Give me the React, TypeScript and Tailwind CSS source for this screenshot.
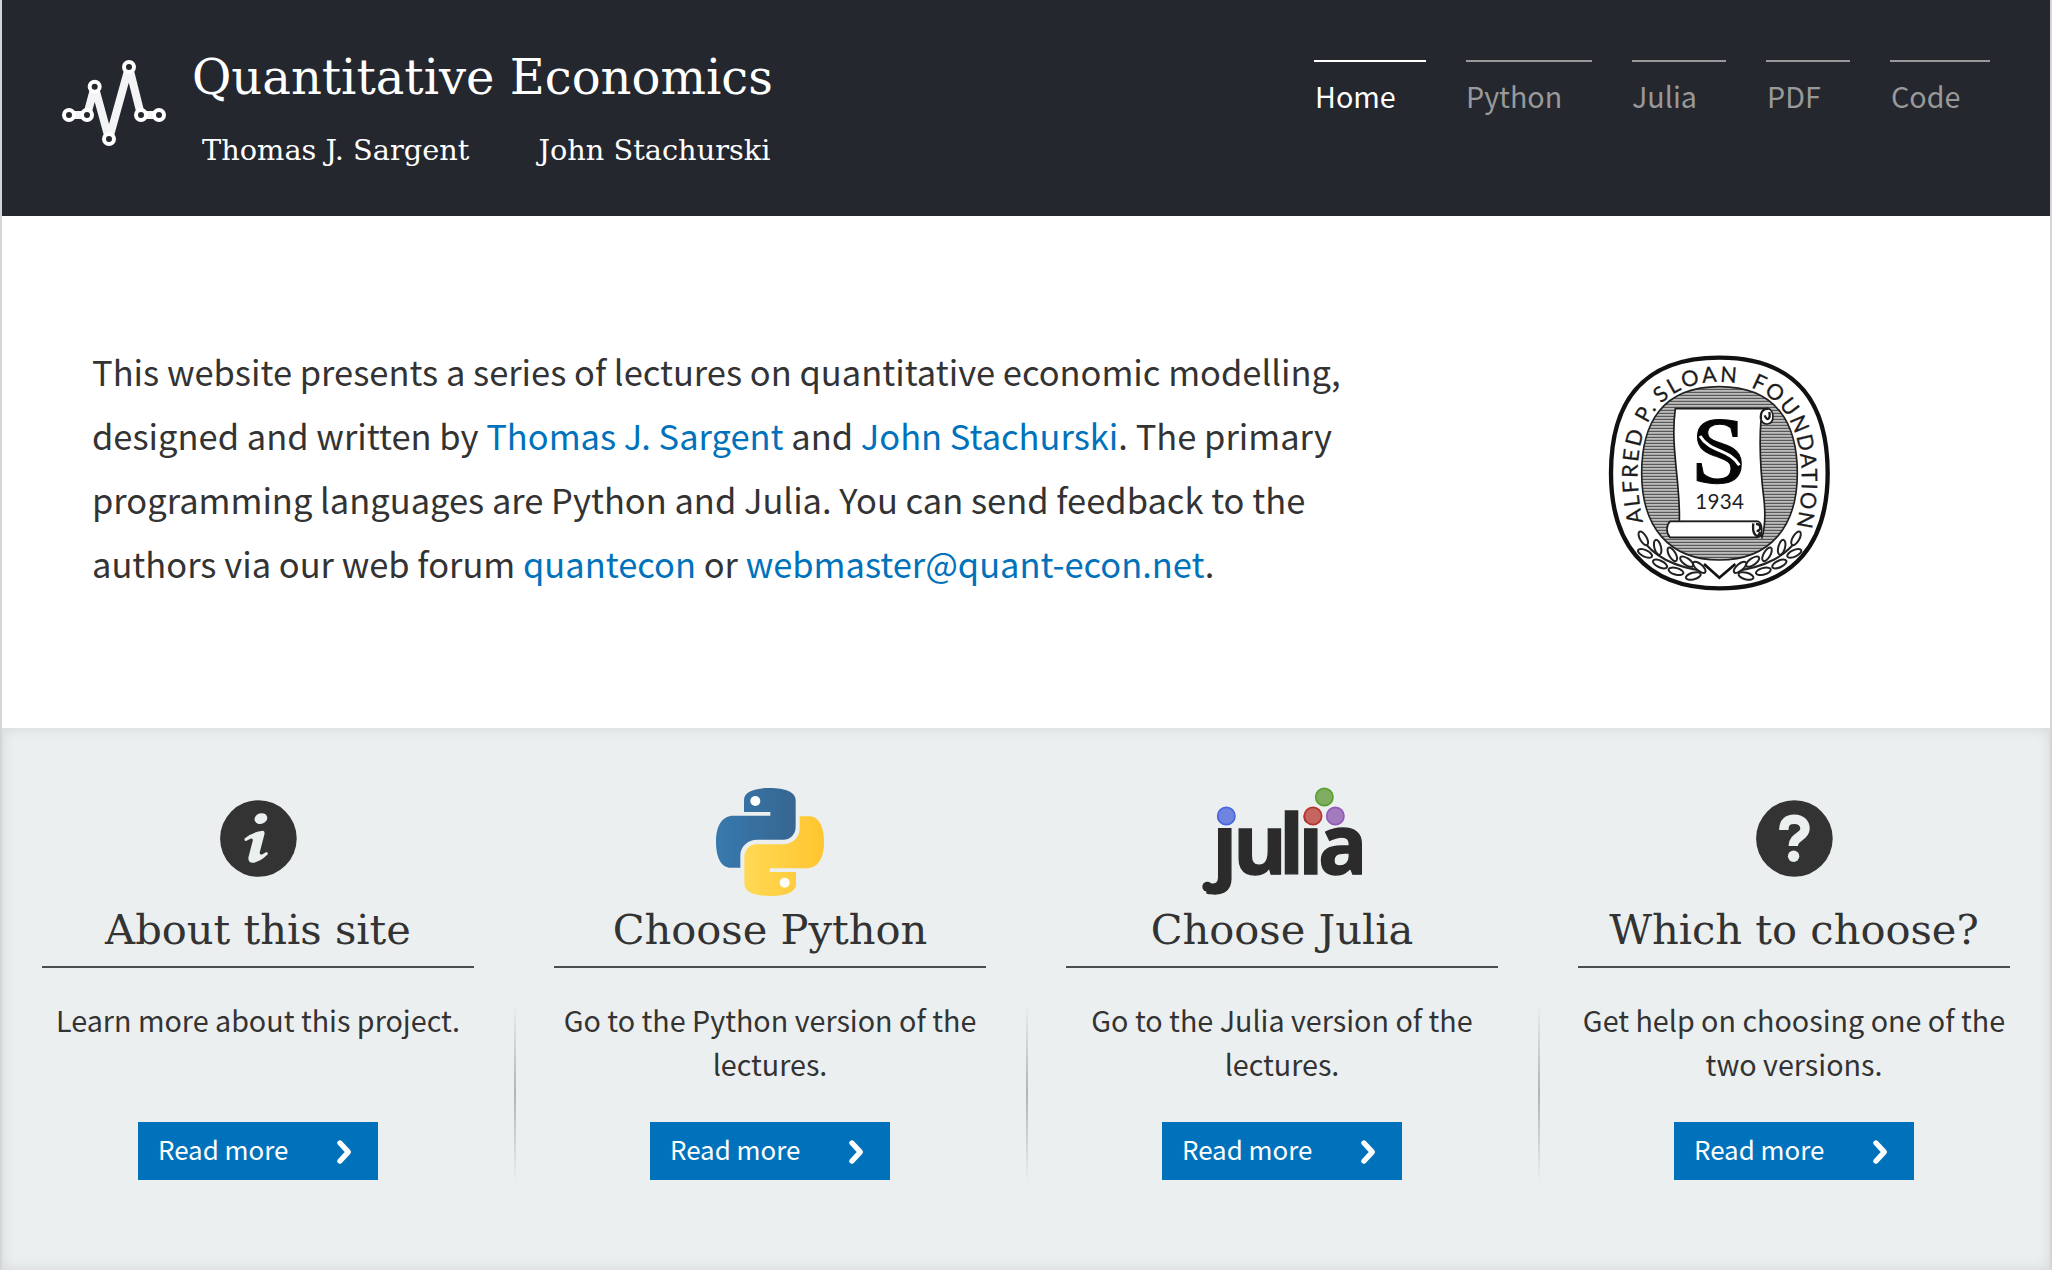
import React from 'react';

const NAV = [
  { label: 'Home', width: 'w-[112px] pl-px', tone: 'border-white text-white' },
  { label: 'Python', width: 'w-[126px]', tone: 'border-[#999] text-[#999]' },
  { label: 'Julia', width: 'w-[94px]', tone: 'border-[#999] text-[#999]' },
  { label: 'PDF', width: 'w-[84px] pl-px', tone: 'border-[#999] text-[#999]' },
  { label: 'Code', width: 'w-[100px] pl-px', tone: 'border-[#999] text-[#999]' },
];

function PulseLogo() {
  const nodes = [[57, 195], [111, 195], [134, 110], [177, 267], [237, 51], [273, 195], [327, 195]];
  return (
    <svg className="mt-[60px] ml-[60px] h-[86px] w-[104px] shrink-0" viewBox="36 30 312 258">
      <polyline points={nodes.map((n) => n.join(',')).join(' ')} fill="none" stroke="#f4f4f4" strokeWidth="24" strokeLinejoin="round" />
      {nodes.map(([x, y]) => (
        <circle key={`${x}-${y}`} cx={x} cy={y} r="15" fill="#24272e" stroke="#fff" strokeWidth="12" />
      ))}
    </svg>
  );
}

const LEAVES: [number, number, number][] = [
  [160, 595, 60], [203, 622, 75], [247, 643, 60], [290, 665, 35], [328, 682, 40],
  [165, 640, 25], [210, 672, 25], [258, 694, 15], [310, 708, -15],
];

function Laurel() {
  return (
    <g fill="#fff" stroke="#222" strokeWidth="6">
      <path d="M150 590C190 650 250 680 345 694" fill="none" />
      {LEAVES.map(([x, y, a]) => (
        <ellipse key={`${x}-${y}`} cx={x} cy={y} rx="23" ry="10" transform={`rotate(${a} ${x} ${y})`} />
      ))}
    </g>
  );
}

function SloanSeal() {
  const lines = Array.from({ length: 58 }, (_, i) => 146 + i * 9);
  return (
    <svg className="h-[260px] w-[260px]" viewBox="0 0 780 780">
      <defs>
        <clipPath id="seal-field">
          <path d="M388 140C560 140 622 250 622 400C622 560 540 660 388 660C236 660 155 560 155 400C155 250 216 140 388 140Z" />
        </clipPath>
        <path id="seal-text" d="M160 549C128 400 142 280 198 209C250 146 320 126 388 126C456 126 524 146 577 209C634 280 652 410 618 566" />
      </defs>
      <path d="M388 53C630 53 713 200 713 400C713 600 620 745 388 745C156 745 63 600 63 400C63 200 146 53 388 53Z" fill="#fff" stroke="#111" strokeWidth="13" />
      <g clipPath="url(#seal-field)">
        <rect x="150" y="135" width="480" height="530" fill="#d2d2d2" />
        {lines.map((y) => (
          <rect key={y} x="150" y={y} width="480" height="4.5" fill="#585858" />
        ))}
      </g>
      <path d="M388 140C560 140 622 250 622 400C622 560 540 660 388 660C236 660 155 560 155 400C155 250 216 140 388 140Z" fill="none" stroke="#222" strokeWidth="5" />
      <g fill="#1c1c1c" stroke="#1c1c1c" strokeWidth="0.8" fontFamily="'Lato', sans-serif" fontSize="65">
        <text><textPath href="#seal-text" startOffset="2" textLength="275">ALFRED</textPath></text>
        <text><textPath href="#seal-text" startOffset="303" textLength="54">P.</textPath></text>
        <text><textPath href="#seal-text" startOffset="376" textLength="242">SLOAN</textPath></text>
        <text><textPath href="#seal-text" startOffset="663" textLength="482">FOUNDATION</textPath></text>
      </g>
      <path d="M256 206H535C552 210 556 250 532 252C520 253 515 245 513 238C506 330 512 400 522 480C526 520 526 560 516 592L500 545H268C272 430 240 320 256 206Z" fill="#fff" stroke="#1c1c1c" strokeWidth="5" />
      <path d="M513 238C510 215 520 206 535 206M524 226C532 246 542 236 538 216" fill="none" stroke="#1c1c1c" strokeWidth="7" />
      <path d="M240 544H504C518 550 520 585 504 592H240C228 580 228 556 240 544Z" fill="#fff" stroke="#1c1c1c" strokeWidth="5" />
      <path d="M490 550C485 585 505 600 510 575M498 552C515 550 514 575 500 572" fill="none" stroke="#1c1c1c" strokeWidth="7" />
      <text x="306" y="430" fontFamily="'Liberation Serif', serif" fontWeight="700" fontSize="288" fill="#050505" stroke="#050505" strokeWidth="3">S</text>
      <path d="M330 288C360 338 418 326 448 376" fill="none" stroke="#fff" strokeWidth="9" />
      <text x="316" y="508" fontFamily="'Lato', sans-serif" fontSize="62" textLength="146" fill="#222">1934</text>
      <path d="M345 664H435L388 713Z" fill="#fff" />
      <Laurel />
      <g transform="translate(778 0) scale(-1 1)"><Laurel /></g>
      <path d="M342 672L388 713L436 672" fill="none" stroke="#111" strokeWidth="8" />
    </svg>
  );
}

function InfoIcon() {
  return (
    <svg className="mt-3 h-[77px] w-[77px]" viewBox="0 0 77 77">
      <circle cx="38.4" cy="38.5" r="38.3" fill="#333" />
      <ellipse cx="40.9" cy="18.6" rx="6.5" ry="5.3" transform="rotate(-20 40.9 18.6)" fill="#ebeff0" />
      <path d="M43 30.8Q45 31.3 44.5 34L39.7 52.5Q39.5 55 42 54.4L46.4 52Q48.4 52.5 47.6 54.6Q40 62 33 62.8Q27.6 63 28.5 57L32.8 40.5Q33 38 30.5 38.8L26 41Q24 41 24.6 38.4Q33 31.6 43 30.8Z" fill="#ebeff0" />
    </svg>
  );
}

function QuestionIcon() {
  return (
    <svg className="mt-3 h-[77px] w-[77px]" viewBox="0 0 77 77">
      <circle cx="38.4" cy="38.5" r="38.3" fill="#333" />
      <path d="M27.8 30C27.8 22 32 19.2 38.3 19.2C45 19.2 49 23 49 28.8C49 37 37.2 36.5 37.2 46" fill="none" stroke="#ebeff0" strokeWidth="9.4" />
      <circle cx="37.6" cy="56.3" r="5.7" fill="#ebeff0" />
    </svg>
  );
}

const SNAKE =
  'M240 54C195 54 162 64 162 90V126H241V137H130C98 137 78 165 78 215C78 265 95 293 122 293H151V257C151 230 172 209 202 209H280C302 209 317 192 317 170V90C317 66 285 54 240 54Z';

function PythonLogo() {
  return (
    <svg className="h-[108px] w-[108px]" viewBox="78 54 324 324">
      <defs>
        <linearGradient id="snake-blue" x1="0" y1="0" x2="1" y2="0">
          <stop offset="0" stopColor="#3779af" />
          <stop offset="1" stopColor="#376690" />
        </linearGradient>
        <linearGradient id="snake-yellow" x1="1" y1="0" x2="0" y2="0">
          <stop offset="0" stopColor="#ffd955" />
          <stop offset="1" stopColor="#ffc530" />
        </linearGradient>
      </defs>
      <path d={SNAKE} fill="url(#snake-blue)" />
      <path d={SNAKE} fill="url(#snake-yellow)" transform="rotate(180 240 216)" />
      <circle cx="196" cy="93" r="15" fill="#fff" />
      <circle cx="284" cy="338" r="15" fill="#fff" />
    </svg>
  );
}

function JuliaLogo() {
  return (
    <svg className="h-[108px] w-[160px] overflow-visible" viewBox="36 54 480 324">
      <text x="67 129 267 325 384" y="311" fontFamily="'Open Sans', sans-serif" fontWeight="700" fontSize="246" fill="#2b2b2b" stroke="#2b2b2b" strokeWidth="4">julia</text>
      <circle cx="52" cy="350" r="15" fill="#2b2b2b" />
      <g strokeWidth="5">
        <circle cx="109" cy="138" r="26" fill="#6f83e0" stroke="#4a66df" />
        <circle cx="403" cy="81" r="26" fill="#80ac60" stroke="#5a9f32" />
        <circle cx="369" cy="138" r="26" fill="#c4655f" stroke="#b8332c" />
        <circle cx="436" cy="138" r="26" fill="#a27bbf" stroke="#9259b5" />
      </g>
    </svg>
  );
}

const CARDS = [
  { title: 'About this site', text: 'Learn more about this project.', icon: <InfoIcon /> },
  { title: 'Choose Python', text: 'Go to the Python version of the lectures.', icon: <PythonLogo /> },
  { title: 'Choose Julia', text: 'Go to the Julia version of the lectures.', icon: <JuliaLogo /> },
  { title: 'Which to choose?', text: 'Get help on choosing one of the two versions.', icon: <QuestionIcon /> },
];

function Link({ children }: { children: React.ReactNode }) {
  return <a href="#" className="text-[#0072bc]">{children}</a>;
}

export default function App() {
  return (
    <div className="flex h-[1270px] w-full flex-col overflow-hidden border-x-2 border-[#d4d5d6] bg-white font-['Noto_Sans_CJK_SC',sans-serif] text-[#333]">
      <header className="flex h-[216px] shrink-0 items-start bg-[#24272e]">
        <PulseLogo />
        <div className="ml-[26px] pt-[47px] font-['DejaVu_Serif',serif] whitespace-nowrap text-white">
          <h1 className="text-[48px] leading-[60px]">Quantitative Economics</h1>
          <div className="mt-[23px] ml-2.5 flex gap-[69px] text-[28.8px] leading-10">
            <span>Thomas J. Sargent</span>
            <span>John Stachurski</span>
          </div>
        </div>
        <nav className="mt-[60px] mr-[60px] ml-auto flex gap-10">
          {NAV.map((n) => (
            <a key={n.label} href="#" className={`${n.width} ${n.tone} border-t-2 pt-3 text-[28.7px] leading-[44px]`}>
              {n.label}
            </a>
          ))}
        </nav>
      </header>

      <main className="flex h-[512px] shrink-0 items-start pl-[90px]">
        <p className="w-[1260px] pt-[123px] text-[34.47px] leading-[64px]">
          This website presents a series of lectures on quantitative economic modelling, designed and written by{' '}
          <Link>Thomas J. Sargent</Link> and <Link>John Stachurski</Link>. The primary programming languages are
          Python and Julia. You can send feedback to the authors via our web forum <Link>quantecon</Link> or{' '}
          <Link>webmaster@quant-econ.net</Link>.
        </p>
        <div className="mt-[124px] ml-[238px]">
          <SloanSeal />
        </div>
      </main>

      <section className="grid flex-1 grid-cols-4 bg-[#ebeff0] shadow-[inset_0_0_14px_rgba(0,0,0,0.1)]">
        {CARDS.map((c, i) => (
          <article key={c.title} className="relative flex flex-col items-center px-10 text-center">
            {i > 0 && (
              <div className="absolute top-[275px] left-0 h-[180px] w-0.5 bg-linear-to-b from-transparent via-black/25 to-transparent" />
            )}
            <div className="flex h-[175px] items-start pt-[60px]">{c.icon}</div>
            <h2 className="w-full border-b-2 border-[#4c4f50] pb-[9px] font-['DejaVu_Serif',serif] text-[41.6px] leading-[54px]">
              {c.title}
            </h2>
            <p className="mt-[30px] h-[88px] text-[28.7px] leading-[44px]">{c.text}</p>
            <a href="#" className="mt-9 flex h-[58px] w-60 items-start justify-between bg-[#0072bc] pr-[26px] pl-5 text-white">
              <span className="text-[25.9px] leading-[54px]">Read more</span>
              <svg className="mt-[17px] h-[26px] w-4" viewBox="0 0 16 26" fill="none" stroke="#fff" strokeWidth="5.4" strokeLinecap="round" strokeLinejoin="round">
                <path d="M4 4L12.3 13L4 22" />
              </svg>
            </a>
          </article>
        ))}
      </section>
    </div>
  );
}
